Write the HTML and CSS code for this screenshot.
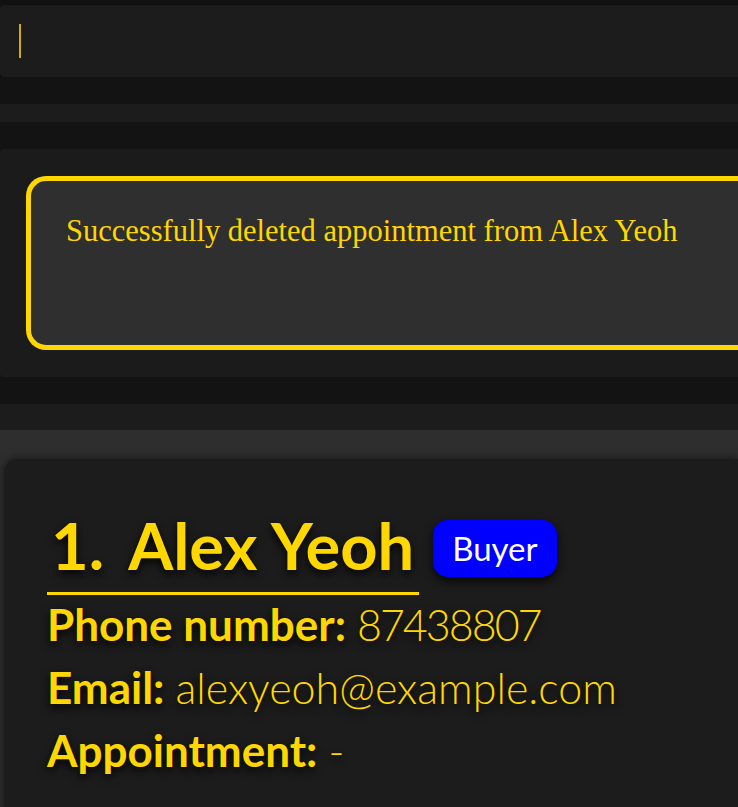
FILE: index.html
```html
<!DOCTYPE html>
<html>
<head>
<meta charset="utf-8">
<link rel="stylesheet" href="styles.css">
</head>
<body>
<div class="app">
  <div class="top-edge"></div>
  <div class="command-box"><span class="caret"></span></div>
  <div class="gap"></div>
  <div class="strip"></div>
  <div class="gap"></div>
  <div class="result-panel">
    <div class="result-box">Successfully deleted appointment from Alex Yeoh</div>
  </div>
  <div class="gap"></div>
  <div class="strip strip-tall"></div>
  <div class="list">
    <div class="card">
      <div class="title-row">
        <div class="title"><span class="index">1.</span><span class="name">Alex Yeoh</span></div>
        <span class="tag">Buyer</span>
      </div>
      <div class="fields">
        <div class="field"><span class="label">Phone number:</span> <span class="value value-phone">87438807</span></div>
        <div class="field"><span class="label">Email:</span> <span class="value">alexyeoh@example.com</span></div>
        <div class="field"><span class="label">Appointment:</span> <span class="value">-</span></div>
      </div>
    </div>
  </div>
</div>
</body>
</html>
```
FILE: styles.css
```css
html, body {
  margin: 0;
  padding: 0;
  background: #131313;
  overflow: hidden;
}
.app {
  width: 738px;
  height: 807px;
  display: flex;
  flex-direction: column;
  overflow: hidden;
}
.top-edge {
  height: 5px;
  flex: none;
  background: #111111;
}
.command-box {
  height: 72px;
  flex: none;
  background: #1c1c1c;
  border-radius: 4px 0 0 4px;
  box-shadow: 0 1px 2px rgba(0,0,0,0.5);
  display: flex;
  align-items: flex-start;
  padding-left: 19px;
  padding-top: 19px;
  box-sizing: border-box;
}
.caret {
  width: 2px;
  height: 34px;
  background: #d2ae00;
}
.gap {
  height: 27px;
  flex: none;
  background: #131313;
}
.strip {
  height: 18px;
  flex: none;
  background: #1c1c1c;
}
.strip-tall {
  height: 26px;
}
.result-panel {
  height: 228px;
  flex: none;
  background: #1b1b1b;
  border-radius: 4px 0 0 4px;
  padding: 27px 0 27px 26px;
  box-sizing: border-box;
}
.result-box {
  height: 174px;
  box-sizing: border-box;
  background: #2f2f2f;
  border: 5px solid #ffd700;
  border-right: none;
  border-radius: 20px 0 0 20px;
  padding: 33px 0 0 35px;
  font-family: "Liberation Serif", "Times New Roman", serif;
  font-size: 30.5px;
  color: #ffd700;
  white-space: nowrap;
  overflow: hidden;
}
.list {
  flex: 1;
  background: #2e2e2e;
  padding: 29px 0 0 4px;
  overflow: hidden;
}
.card {
  background: #1c1c1c;
  border-radius: 14px 0 0 0;
  box-shadow: 0 0 10px rgba(0,0,0,0.55);
  height: 400px;
  padding: 50px 0 0 43px;
  box-sizing: border-box;
  font-family: Lato, "Open Sans", sans-serif;
  color: #ffd700;
}
.title-row {
  display: flex;
  align-items: center;
  gap: 14px;
}
.title {
  border-bottom: 3px solid #ffd700;
  font-size: 65px;
  font-weight: 700;
  line-height: 72px;
  padding-bottom: 11px;
  padding-right: 5px;
  text-shadow: 0 4px 8px rgba(0,0,0,0.9);
  white-space: nowrap;
}
.index {
  margin-right: 24px;
  padding-left: 4px;
}
.tag {
  background: #0000ff;
  color: #ffffff;
  font-size: 33px;
  font-weight: 400;
  border-radius: 15px;
  padding: 0 19px;
  height: 57px;
  line-height: 57px;
  box-shadow: 0 4px 10px rgba(0,0,0,0.8);
  margin-top: -8px;
}
.fields {
  margin-top: -2px;
}
.field {
  font-size: 43px;
  line-height: 62px;
  white-space: nowrap;
  text-shadow: 0 4px 8px rgba(0,0,0,0.9);
}
.label {
  font-weight: 700;
  font-size: 44px;
}
.value {
  font-weight: 300;
}
.value-phone {
  letter-spacing: -2px;
}
```
